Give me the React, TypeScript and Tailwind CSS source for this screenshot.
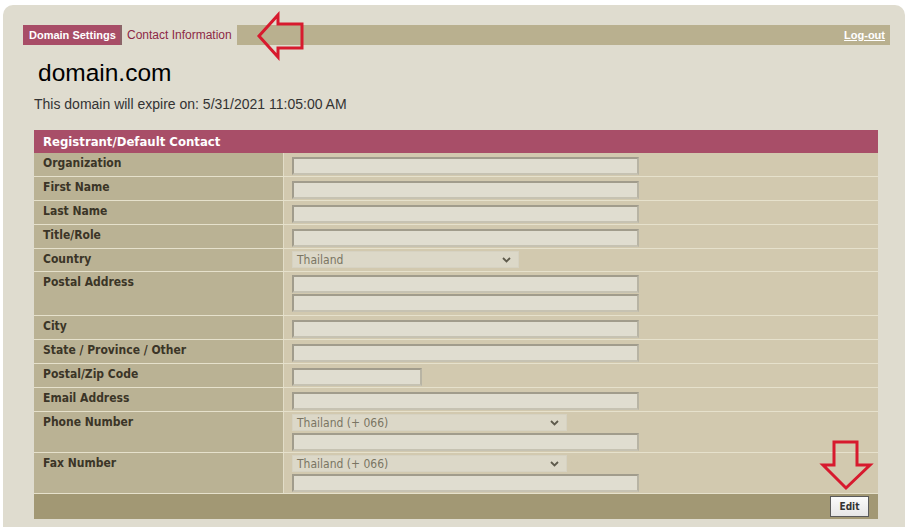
import type { ReactNode } from "react";

const tableFont = { fontFamily: '"DejaVu Sans Condensed", "DejaVu Sans", Verdana, sans-serif' };
const arial = { fontFamily: '"Liberation Sans", Arial, sans-serif' };

function TextBox({ width = "w-[347px]" }: { width?: string }) {
  return (
    <div
      className={`h-[18px] ${width} border-2 border-t-[#a19c8c] border-l-[#a19c8c] border-b-[#c6c2b2] border-r-[#b8b4a4] bg-[#e0ddd0]`}
    />
  );
}

function SelectBox({ value, width }: { value: string; width: string }) {
  return (
    <div
      className={`flex h-[17px] ${width} items-center justify-between border border-[#d6d2c2] bg-[#dcd8c8] pl-[4px] pr-[7px] text-[12px] text-[#7a7563]`}
    >
      <span className="leading-none">{value}</span>
      <svg width="9" height="6" viewBox="0 0 9 6" fill="none" stroke="#5e5a4c" strokeWidth="1.8">
        <path d="M1 1l3.5 3.5L8 1" />
      </svg>
    </div>
  );
}

function Row({ label, children, pt = "pt-[4px]", pb = "pb-[1px]" }: { label: string; children: ReactNode; pt?: string; pb?: string }) {
  return (
    <div className="grid grid-cols-[249px_1px_1fr] border-b border-[#e6e1cc]">
      <div className="bg-[#bab294] pl-[9px] pt-[3px] text-[12px] font-bold leading-[14px] text-[#3b3527]">{label}</div>
      <div className="bg-[#e2ddc8]" />
      <div className={`flex flex-col gap-[1px] bg-[#d2c9af] pl-[8px] ${pt} ${pb}`}>{children}</div>
    </div>
  );
}

export default function App() {
  return (
    <div className="relative h-[527px] w-[910px] overflow-hidden bg-white pl-[3px] pr-[5px] pt-[5px]">
      <div className="h-full rounded-t-[10px] bg-[#dfdccf] pl-[20px] pr-[15px] pt-[20px]">
        {/* Tabs */}
        <div className="flex h-[20px] items-stretch" style={arial}>
          <div className="flex w-[99px] items-center border-r-2 border-[#8c6468] bg-[#a84d67] pl-[6px] text-[11px] font-bold text-white">
            Domain Settings
          </div>
          <div className="flex w-[115px] items-center pl-[5px] text-[12px] text-[#8d2946]">Contact Information</div>
          <div className="flex flex-1 items-center justify-end bg-[#b9b08f] pr-[5px]">
            <span className="text-[11px] font-bold text-white underline">Log-out</span>
          </div>
        </div>

        <div className="ml-[15px] mt-[14px] text-[24.5px] leading-[28px] text-black" style={arial}>
          domain.com
        </div>
        <div className="ml-[11px] mt-[9px] text-[14px] leading-[16px] text-[#333333]" style={arial}>
          This domain will expire on: 5/31/2021 11:05:00 AM
        </div>

        {/* Contact table */}
        <div className="ml-[11px] mt-[18px] w-[844px]" style={tableFont}>
          <div className="flex h-[23px] items-center bg-[#a84e68] pl-[9px] text-[13px] font-bold text-white">
            Registrant/Default Contact
          </div>
          <Row label="Organization">
            <TextBox />
          </Row>
          <Row label="First Name">
            <TextBox />
          </Row>
          <Row label="Last Name">
            <TextBox />
          </Row>
          <Row label="Title/Role">
            <TextBox />
          </Row>
          <Row label="Country" pt="pt-[2px]" pb="pb-[3px]">
            <SelectBox value="Thailand" width="w-[227px]" />
          </Row>
          <Row label="Postal Address" pt="pt-[3px]" pb="pb-[3px]">
            <TextBox />
            <TextBox />
          </Row>
          <Row label="City">
            <TextBox />
          </Row>
          <Row label="State / Province / Other">
            <TextBox />
          </Row>
          <Row label="Postal/Zip Code">
            <TextBox width="w-[130px]" />
          </Row>
          <Row label="Email Address">
            <TextBox />
          </Row>
          <Row label="Phone Number" pt="pt-[2px]" pb="pb-[1px]">
            <div className="flex flex-col gap-[2px]">
              <SelectBox value="Thailand (+ 066)" width="w-[275px]" />
              <TextBox />
            </div>
          </Row>
          <Row label="Fax Number" pt="pt-[2px]" pb="pb-[1px]">
            <div className="flex flex-col gap-[2px]">
              <SelectBox value="Thailand (+ 066)" width="w-[275px]" />
              <TextBox />
            </div>
          </Row>
          <div className="flex h-[25px] items-center justify-end bg-[#a29874] pr-[9px]">
            <button
              type="button"
              className="h-[21px] w-[39px] border border-[#5a5a5a] bg-gradient-to-b from-[#fbfbfb] to-[#e6e6e6] text-[10px] font-bold text-[#333333]"
            >
              Edit
            </button>
          </div>
        </div>
      </div>

      {/* Annotation arrows */}
      <svg className="pointer-events-none absolute left-0 top-0" width="910" height="527" fill="none" stroke="#d71a2e" strokeWidth="3" strokeLinejoin="miter">
        <polygon points="259,36 278,15 278,24 302,24 302,48 278,48 278,57" />
        <polygon points="834,442 857,442 857,465 870,465 846,488 823,465 834,465" />
      </svg>
    </div>
  );
}
